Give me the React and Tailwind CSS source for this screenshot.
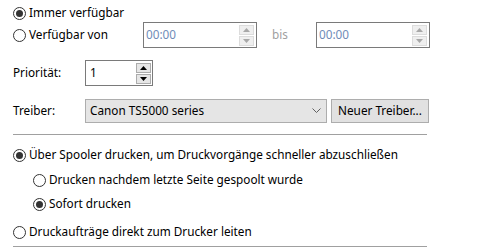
import React from "react";

const font = { fontFamily: '"Noto Sans", "Segoe UI", sans-serif' };

function Radio({ checked }) {
  return (
    <span className="flex h-[13px] w-[13px] shrink-0 items-center justify-center rounded-full border border-[#333333] bg-white">
      {checked && <span className="h-[7px] w-[7px] rounded-full bg-[#333333]" />}
    </span>
  );
}

function Arrow({ up, color }) {
  return (
    <svg width="7" height="4" viewBox="0 0 7 4">
      {up ? <path d="M0 4 L3.5 0 L7 4 Z" fill={color} /> : <path d="M0 0 L3.5 4 L7 0 Z" fill={color} />}
    </svg>
  );
}

function Spin({ dark }) {
  const c = dark ? "#000000" : "#a8a8a8";
  const b = dark ? "border-[#acacac] bg-[#e6e6e6]" : "border-[#dcdcdc] bg-[#efefef]";
  return (
    <div className="flex h-full flex-col justify-center gap-[1px] py-[1px] pr-[1px]">
      <div className={`flex h-[10px] w-[15px] items-center justify-center border ${b}`}>
        <Arrow up color={c} />
      </div>
      <div className={`flex h-[10px] w-[15px] items-center justify-center border ${b}`}>
        <Arrow color={c} />
      </div>
    </div>
  );
}

function TimeBox() {
  return (
    <div className="flex h-[26px] w-[114px] items-center justify-between border border-[#7a7a7a] bg-white pl-[2px] pr-[1px]">
      <span className="text-[#6f8cb8]">00:00</span>
      <Spin />
    </div>
  );
}

export default function App() {
  return (
    <div className="h-[248px] w-[493px] overflow-hidden bg-white pl-[13px] pt-[4px] text-[11.75px] leading-none text-black" style={font}>
      <div className="flex h-[18px] items-center gap-[3px]">
        <Radio checked />
        <span>Immer verfügbar</span>
      </div>
      <div className="flex h-[26px] items-center">
        <div className="flex w-[130px] items-center gap-[3px]">
          <Radio />
          <span>Verfügbar von</span>
        </div>
        <TimeBox />
        <span className="ml-[15px] w-[44px] text-[#a0a0a0]">bis</span>
        <TimeBox />
      </div>
      <div className="mt-[12px] flex h-[26px] items-center">
        <span className="w-[72px]">Priorität:</span>
        <div className="flex h-[26px] w-[68px] items-center justify-between border border-[#7a7a7a] bg-white pl-[4px]">
          <span>1</span>
          <Spin dark />
        </div>
      </div>
      <div className="mt-[12px] flex h-[25px] items-center">
        <span className="w-[72px]">Treiber:</span>
        <div className="flex h-[24px] w-[242px] items-center justify-between border border-[#adadad] bg-[#e5e5e5] pl-[4px] pr-[5px]">
          <span>Canon TS5000 series</span>
          <svg width="9" height="5" viewBox="0 0 9 5">
            <path d="M0.5 0.5 L4.5 4.5 L8.5 0.5" stroke="#606060" fill="none" strokeWidth="1" />
          </svg>
        </div>
        <div className="ml-[4px] flex h-[24px] w-[98px] items-center justify-center border border-[#adadad] bg-[#e1e1e1]">
          Neuer Treiber...
        </div>
      </div>
      <div className="mt-[11px] h-px w-[414px] bg-[#a0a0a0]" />
      <div className="mt-[10px] flex h-[20px] items-center gap-[3px]">
        <Radio checked />
        <span>Über Spooler drucken, um Druckvorgänge schneller abzuschließen</span>
      </div>
      <div className="ml-[20px] mt-[5px] flex h-[20px] items-center gap-[3px]">
        <Radio />
        <span>Drucken nachdem letzte Seite gespoolt wurde</span>
      </div>
      <div className="ml-[20px] mt-[4px] flex h-[20px] items-center gap-[3px]">
        <Radio checked />
        <span>Sofort drucken</span>
      </div>
      <div className="mt-[8px] flex h-[20px] items-center gap-[3px]">
        <Radio />
        <span>Druckaufträge direkt zum Drucker leiten</span>
      </div>
      <div className="mt-[4px] h-px w-[414px] bg-[#a0a0a0]" />
    </div>
  );
}
